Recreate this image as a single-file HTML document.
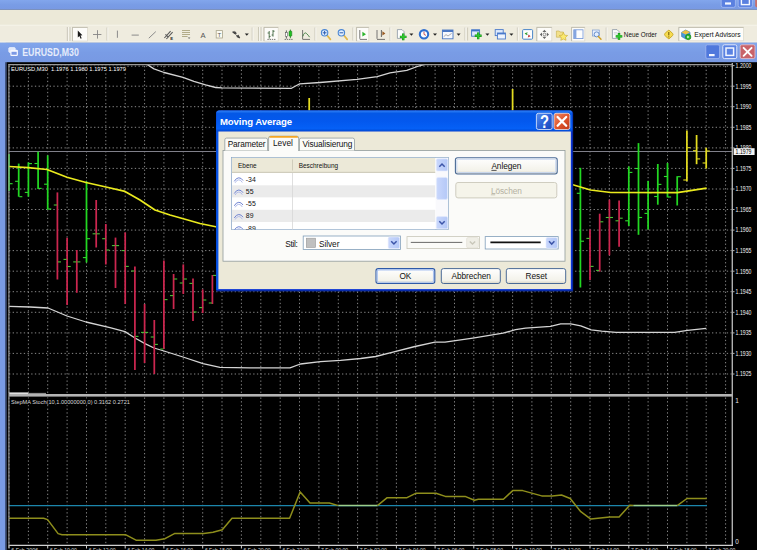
<!DOCTYPE html>
<html lang="de"><head><meta charset="utf-8"><title>EURUSD,M30 - Moving Average</title>
<style>html,body{margin:0;padding:0;background:#000;overflow:hidden}body{width:757px;height:550px;position:relative}svg{display:block;position:absolute;left:0;top:0}text{font-family:"Liberation Sans", sans-serif;white-space:pre}</style>
</head><body>
<svg width="757" height="550" viewBox="0 0 757 550">
<defs>
<linearGradient id="gTitle" x1="0" y1="0" x2="0" y2="1"><stop offset="0" stop-color="#2f80f6"/><stop offset="0.14" stop-color="#0458e6"/><stop offset="0.5" stop-color="#0358ee"/><stop offset="0.86" stop-color="#0560f6"/><stop offset="1" stop-color="#0046d0"/></linearGradient>
<linearGradient id="gInact" x1="0" y1="0" x2="0" y2="1"><stop offset="0" stop-color="#82a6ec"/><stop offset="0.5" stop-color="#799ce5"/><stop offset="1" stop-color="#7899e3"/></linearGradient>
<linearGradient id="gBtn" x1="0" y1="0" x2="0" y2="1"><stop offset="0" stop-color="#ffffff"/><stop offset="0.8" stop-color="#f3f2ea"/><stop offset="1" stop-color="#d9d5c6"/></linearGradient>
<linearGradient id="gClose" x1="0" y1="0" x2="1" y2="1"><stop offset="0" stop-color="#ee8c6a"/><stop offset="0.5" stop-color="#e0552c"/><stop offset="1" stop-color="#bf3a1a"/></linearGradient>
<linearGradient id="gHelp" x1="0" y1="0" x2="1" y2="1"><stop offset="0" stop-color="#5a90ee"/><stop offset="0.5" stop-color="#2b62d8"/><stop offset="1" stop-color="#1c47b8"/></linearGradient>
<linearGradient id="gSb" x1="0" y1="0" x2="1" y2="0"><stop offset="0" stop-color="#c9d7fc"/><stop offset="1" stop-color="#b4c8f7"/></linearGradient>
</defs>
<rect x="0" y="0" width="757" height="550" fill="#000"/>
<g stroke="#888888" stroke-width="1" stroke-dasharray="1.3 2.4" fill="none" shape-rendering="auto">
<path d="M9.0 66V393M9.0 397.5V545"/>
<path d="M28.4 66V393M28.4 397.5V545"/>
<path d="M47.7 66V393M47.7 397.5V545"/>
<path d="M67.1 66V393M67.1 397.5V545"/>
<path d="M86.5 66V393M86.5 397.5V545"/>
<path d="M105.8 66V393M105.8 397.5V545"/>
<path d="M125.2 66V393M125.2 397.5V545"/>
<path d="M144.6 66V393M144.6 397.5V545"/>
<path d="M163.9 66V393M163.9 397.5V545"/>
<path d="M183.3 66V393M183.3 397.5V545"/>
<path d="M202.7 66V393M202.7 397.5V545"/>
<path d="M222.0 66V393M222.0 397.5V545"/>
<path d="M241.4 66V393M241.4 397.5V545"/>
<path d="M260.8 66V393M260.8 397.5V545"/>
<path d="M280.2 66V393M280.2 397.5V545"/>
<path d="M299.5 66V393M299.5 397.5V545"/>
<path d="M318.9 66V393M318.9 397.5V545"/>
<path d="M338.3 66V393M338.3 397.5V545"/>
<path d="M357.6 66V393M357.6 397.5V545"/>
<path d="M377.0 66V393M377.0 397.5V545"/>
<path d="M396.4 66V393M396.4 397.5V545"/>
<path d="M415.7 66V393M415.7 397.5V545"/>
<path d="M435.1 66V393M435.1 397.5V545"/>
<path d="M454.5 66V393M454.5 397.5V545"/>
<path d="M473.8 66V393M473.8 397.5V545"/>
<path d="M493.2 66V393M493.2 397.5V545"/>
<path d="M512.6 66V393M512.6 397.5V545"/>
<path d="M531.9 66V393M531.9 397.5V545"/>
<path d="M551.3 66V393M551.3 397.5V545"/>
<path d="M570.7 66V393M570.7 397.5V545"/>
<path d="M590.0 66V393M590.0 397.5V545"/>
<path d="M609.4 66V393M609.4 397.5V545"/>
<path d="M628.8 66V393M628.8 397.5V545"/>
<path d="M648.1 66V393M648.1 397.5V545"/>
<path d="M667.5 66V393M667.5 397.5V545"/>
<path d="M686.9 66V393M686.9 397.5V545"/>
<path d="M706.2 66V393M706.2 397.5V545"/>
<path d="M725.6 66V393M725.6 397.5V545"/>
<path d="M9 66.2H732"/>
<path d="M9 86.2H732"/>
<path d="M9 106.7H732"/>
<path d="M9 127.3H732"/>
<path d="M9 147.9H732"/>
<path d="M9 168.4H732"/>
<path d="M9 189.0H732"/>
<path d="M9 209.5H732"/>
<path d="M9 230.1H732"/>
<path d="M9 250.6H732"/>
<path d="M9 271.2H732"/>
<path d="M9 291.7H732"/>
<path d="M9 312.3H732"/>
<path d="M9 332.9H732"/>
<path d="M9 353.4H732"/>
<path d="M9 374.0H732"/>
</g>
<path d="M9 151.5H732" stroke="#80808a" stroke-width="1.1" fill="none"/>
<clipPath id="cc"><rect x="9" y="65" width="723" height="329"/></clipPath><g clip-path="url(#cc)">
<path d="M144.8 63.0 L154.0 68.9 L164.1 72.5 L183.0 77.3 L193.9 81.3 L205.6 84.9 L215.7 87.5 L222.0 87.9 L291.5 88.3 L299.7 83.8 L320.0 82.5 L357.0 79.3 L377.2 76.6 L390.0 72.8 L406.8 70.3 L417.4 66.5 L427.5 63.6" stroke="#d4d4d4" stroke-width="1.3" fill="none" stroke-linejoin="round"/>
</g>
<path d="M9.0 306.4 L30.0 307.0 L48.0 308.0 L67.0 316.0 L86.0 322.0 L110.0 327.6 L125.0 331.6 L135.0 338.0 L145.0 343.6 L154.0 348.0 L164.0 351.0 L183.0 357.0 L203.0 363.6 L220.0 367.3 L250.0 367.8 L290.0 367.8 L300.4 364.0 L320.4 361.6 L340.5 360.3 L360.6 358.5 L375.7 356.5 L390.0 352.8 L415.0 346.5 L435.0 342.2 L445.0 342.2 L472.8 338.2 L503.0 333.2 L515.5 329.7 L525.5 328.2 L550.6 326.4 L560.7 323.9 L570.7 323.9 L580.8 325.9 L591.2 329.8 L601.6 331.1 L616.0 332.4 L674.5 332.4 L687.5 330.3 L706.2 328.3" stroke="#d4d4d4" stroke-width="1.3" fill="none" stroke-linejoin="round"/>
<path d="M9.0 154.0V191.0" stroke="#22d822" stroke-width="1.75" fill="none"/>
<path d="M9.5 183.7H12.6" stroke="#30e030" stroke-width="1.1" fill="none"/>
<path d="M18.7 163.6V196.7" stroke="#22d822" stroke-width="1.75" fill="none"/>
<path d="M15.1 181.3H18.2" stroke="#30e030" stroke-width="1.1" fill="none"/>
<path d="M19.2 196.7H22.3" stroke="#30e030" stroke-width="1.1" fill="none"/>
<path d="M28.4 162.4V196.7" stroke="#22d822" stroke-width="1.75" fill="none"/>
<path d="M24.8 192.4H27.9" stroke="#30e030" stroke-width="1.1" fill="none"/>
<path d="M28.9 163.6H32.0" stroke="#30e030" stroke-width="1.1" fill="none"/>
<path d="M38.1 151.8V188.9" stroke="#22d822" stroke-width="1.75" fill="none"/>
<path d="M34.5 163.5H37.6" stroke="#30e030" stroke-width="1.1" fill="none"/>
<path d="M38.6 188.4H41.7" stroke="#30e030" stroke-width="1.1" fill="none"/>
<path d="M47.7 155.4V209.7" stroke="#22d822" stroke-width="1.75" fill="none"/>
<path d="M44.1 184.2H47.2" stroke="#30e030" stroke-width="1.1" fill="none"/>
<path d="M48.2 209.0H51.3" stroke="#30e030" stroke-width="1.1" fill="none"/>
<path d="M57.4 192.4V279.5" stroke="#cc264f" stroke-width="1.75" fill="none"/>
<path d="M53.8 205.0H56.9" stroke="#4cc038" stroke-width="1.1" fill="none"/>
<path d="M57.9 261.9H61.0" stroke="#4cc038" stroke-width="1.1" fill="none"/>
<path d="M67.1 237.7V305.0" stroke="#cc264f" stroke-width="1.75" fill="none"/>
<path d="M63.5 259.4H66.6" stroke="#4cc038" stroke-width="1.1" fill="none"/>
<path d="M67.6 266.5H70.7" stroke="#4cc038" stroke-width="1.1" fill="none"/>
<path d="M76.8 250.0V292.8" stroke="#cc264f" stroke-width="1.75" fill="none"/>
<path d="M73.2 261.9H76.3" stroke="#4cc038" stroke-width="1.1" fill="none"/>
<path d="M77.3 261.9H80.4" stroke="#4cc038" stroke-width="1.1" fill="none"/>
<path d="M86.5 181.3V262.5" stroke="#22d822" stroke-width="1.75" fill="none"/>
<path d="M82.9 257.6H86.0" stroke="#30e030" stroke-width="1.1" fill="none"/>
<path d="M87.0 238.7H90.1" stroke="#30e030" stroke-width="1.1" fill="none"/>
<path d="M96.2 200.0V247.5" stroke="#cc264f" stroke-width="1.75" fill="none"/>
<path d="M92.6 233.8H95.7" stroke="#4cc038" stroke-width="1.1" fill="none"/>
<path d="M96.7 233.8H99.8" stroke="#4cc038" stroke-width="1.1" fill="none"/>
<path d="M105.8 224.0V264.5" stroke="#cc264f" stroke-width="1.75" fill="none"/>
<path d="M102.2 238.7H105.3" stroke="#4cc038" stroke-width="1.1" fill="none"/>
<path d="M106.3 250.0H109.4" stroke="#4cc038" stroke-width="1.1" fill="none"/>
<path d="M115.5 237.6V288.0" stroke="#cc264f" stroke-width="1.75" fill="none"/>
<path d="M111.9 245.6H115.0" stroke="#4cc038" stroke-width="1.1" fill="none"/>
<path d="M116.0 245.6H119.1" stroke="#4cc038" stroke-width="1.1" fill="none"/>
<path d="M125.2 232.4V304.0" stroke="#cc264f" stroke-width="1.75" fill="none"/>
<path d="M121.6 250.6H124.7" stroke="#4cc038" stroke-width="1.1" fill="none"/>
<path d="M125.7 266.4H128.8" stroke="#4cc038" stroke-width="1.1" fill="none"/>
<path d="M134.9 266.4V370.0" stroke="#cc264f" stroke-width="1.75" fill="none"/>
<path d="M131.3 271.0H134.4" stroke="#4cc038" stroke-width="1.1" fill="none"/>
<path d="M135.4 336.4H138.5" stroke="#4cc038" stroke-width="1.1" fill="none"/>
<path d="M144.6 304.0V363.0" stroke="#cc264f" stroke-width="1.75" fill="none"/>
<path d="M141.0 332.4H144.1" stroke="#4cc038" stroke-width="1.1" fill="none"/>
<path d="M145.1 332.4H148.2" stroke="#4cc038" stroke-width="1.1" fill="none"/>
<path d="M154.3 320.0V374.0" stroke="#cc264f" stroke-width="1.75" fill="none"/>
<path d="M150.7 337.0H153.8" stroke="#4cc038" stroke-width="1.1" fill="none"/>
<path d="M154.8 344.4H157.9" stroke="#4cc038" stroke-width="1.1" fill="none"/>
<path d="M163.9 260.6V349.0" stroke="#cc264f" stroke-width="1.75" fill="none"/>
<path d="M160.3 349.0H163.4" stroke="#4cc038" stroke-width="1.1" fill="none"/>
<path d="M164.4 299.6H167.5" stroke="#4cc038" stroke-width="1.1" fill="none"/>
<path d="M173.6 274.0V309.0" stroke="#cc264f" stroke-width="1.75" fill="none"/>
<path d="M170.0 295.6H173.1" stroke="#4cc038" stroke-width="1.1" fill="none"/>
<path d="M174.1 279.0H177.2" stroke="#4cc038" stroke-width="1.1" fill="none"/>
<path d="M183.3 264.4V294.0" stroke="#cc264f" stroke-width="1.75" fill="none"/>
<path d="M179.7 283.0H182.8" stroke="#4cc038" stroke-width="1.1" fill="none"/>
<path d="M183.8 279.0H186.9" stroke="#4cc038" stroke-width="1.1" fill="none"/>
<path d="M193.0 278.4V321.0" stroke="#cc264f" stroke-width="1.75" fill="none"/>
<path d="M189.4 283.4H192.5" stroke="#4cc038" stroke-width="1.1" fill="none"/>
<path d="M193.5 312.0H196.6" stroke="#4cc038" stroke-width="1.1" fill="none"/>
<path d="M202.7 289.4V313.0" stroke="#cc264f" stroke-width="1.75" fill="none"/>
<path d="M199.1 307.6H202.2" stroke="#4cc038" stroke-width="1.1" fill="none"/>
<path d="M203.2 300.0H206.3" stroke="#4cc038" stroke-width="1.1" fill="none"/>
<path d="M212.4 275.0V304.0" stroke="#cc264f" stroke-width="1.75" fill="none"/>
<path d="M208.8 303.0H211.9" stroke="#4cc038" stroke-width="1.1" fill="none"/>
<path d="M212.9 275.4H216.0" stroke="#4cc038" stroke-width="1.1" fill="none"/>
<path d="M309.2 98.0V120.0" stroke="#e4dc20" stroke-width="1.75" fill="none"/>
<path d="M512.6 89.0V120.0" stroke="#e4dc20" stroke-width="1.75" fill="none"/>
<path d="M580.4 167.8V287.5" stroke="#22d822" stroke-width="1.75" fill="none"/>
<path d="M576.8 193.3H579.9" stroke="#30e030" stroke-width="1.1" fill="none"/>
<path d="M580.9 241.2H584.0" stroke="#30e030" stroke-width="1.1" fill="none"/>
<path d="M590.0 229.5V279.9" stroke="#cc264f" stroke-width="1.75" fill="none"/>
<path d="M586.4 238.4H589.5" stroke="#4cc038" stroke-width="1.1" fill="none"/>
<path d="M590.5 266.4H593.6" stroke="#4cc038" stroke-width="1.1" fill="none"/>
<path d="M599.7 213.7V271.7" stroke="#cc264f" stroke-width="1.75" fill="none"/>
<path d="M596.1 270.4H599.2" stroke="#4cc038" stroke-width="1.1" fill="none"/>
<path d="M600.2 221.8H603.3" stroke="#4cc038" stroke-width="1.1" fill="none"/>
<path d="M609.4 199.7V255.2" stroke="#cc264f" stroke-width="1.75" fill="none"/>
<path d="M605.8 217.5H608.9" stroke="#4cc038" stroke-width="1.1" fill="none"/>
<path d="M609.9 217.5H613.0" stroke="#4cc038" stroke-width="1.1" fill="none"/>
<path d="M619.1 200.4V246.8" stroke="#cc264f" stroke-width="1.75" fill="none"/>
<path d="M615.5 220.8H618.6" stroke="#4cc038" stroke-width="1.1" fill="none"/>
<path d="M619.6 218.2H622.7" stroke="#4cc038" stroke-width="1.1" fill="none"/>
<path d="M628.8 166.5V225.9" stroke="#22d822" stroke-width="1.75" fill="none"/>
<path d="M625.2 220.8H628.3" stroke="#30e030" stroke-width="1.1" fill="none"/>
<path d="M629.3 172.4H632.4" stroke="#30e030" stroke-width="1.1" fill="none"/>
<path d="M638.5 143.1V234.8" stroke="#22d822" stroke-width="1.75" fill="none"/>
<path d="M634.9 168.5H638.0" stroke="#30e030" stroke-width="1.1" fill="none"/>
<path d="M639.0 217.5H642.1" stroke="#30e030" stroke-width="1.1" fill="none"/>
<path d="M648.1 181.0V229.6" stroke="#22d822" stroke-width="1.75" fill="none"/>
<path d="M644.5 213.4H647.6" stroke="#30e030" stroke-width="1.1" fill="none"/>
<path d="M648.6 192.7H651.7" stroke="#30e030" stroke-width="1.1" fill="none"/>
<path d="M657.8 164.0V204.7" stroke="#22d822" stroke-width="1.75" fill="none"/>
<path d="M654.2 196.5H657.3" stroke="#30e030" stroke-width="1.1" fill="none"/>
<path d="M658.3 184.4H661.4" stroke="#30e030" stroke-width="1.1" fill="none"/>
<path d="M667.5 163.0V197.5" stroke="#22d822" stroke-width="1.75" fill="none"/>
<path d="M663.9 176.5H667.0" stroke="#30e030" stroke-width="1.1" fill="none"/>
<path d="M668.0 197.0H671.1" stroke="#30e030" stroke-width="1.1" fill="none"/>
<path d="M677.2 176.2V205.5" stroke="#22d822" stroke-width="1.75" fill="none"/>
<path d="M677.7 176.7H680.8" stroke="#30e030" stroke-width="1.1" fill="none"/>
<path d="M686.9 130.4V181.3" stroke="#e4dc20" stroke-width="1.75" fill="none"/>
<path d="M683.3 180.0H686.4" stroke="#e4dc20" stroke-width="1.1" fill="none"/>
<path d="M687.4 147.7H690.5" stroke="#e4dc20" stroke-width="1.1" fill="none"/>
<path d="M696.6 135.0V164.2" stroke="#e4dc20" stroke-width="1.75" fill="none"/>
<path d="M693.0 150.7H696.1" stroke="#e4dc20" stroke-width="1.1" fill="none"/>
<path d="M697.1 158.9H700.2" stroke="#e4dc20" stroke-width="1.1" fill="none"/>
<path d="M706.2 147.7V168.6" stroke="#e4dc20" stroke-width="1.75" fill="none"/>
<path d="M702.6 163.0H705.7" stroke="#e4dc20" stroke-width="1.1" fill="none"/>
<path d="M706.7 151.0H709.8" stroke="#e4dc20" stroke-width="1.1" fill="none"/>
<path d="M9.0 166.5 L28.0 167.6 L47.0 169.5 L67.0 177.3 L86.0 182.5 L106.0 187.0 L125.0 191.4 L140.0 200.0 L155.0 210.0 L170.0 215.0 L186.0 219.5 L200.0 223.5 L217.0 227.0 L240.0 232.0" stroke="#eaea1e" stroke-width="1.7" fill="none" stroke-linejoin="round"/>
<path d="M560.0 181.0 L572.0 184.5 L590.5 190.0 L610.8 192.5 L677.3 192.7 L706.6 188.2" stroke="#eaea1e" stroke-width="1.7" fill="none" stroke-linejoin="round"/>
<rect x="9" y="394" width="724" height="2.6" fill="#b4b4b4"/>
<path d="M9 393.2H28" stroke="#e0e0e0" stroke-width="1.6"/><path d="M28 393.4H46" stroke="#c8c8c8" stroke-width="0.8"/>
<path d="M732.3 63V545" stroke="#b0b0b0" stroke-width="1.4" fill="none"/>
<path d="M9 545.4H733" stroke="#d0d0d0" stroke-width="1.2" fill="none"/>
<path d="M9.0 545V548.5" stroke="#d0d0d0" stroke-width="1"/>
<text x="11.2" y="552.3" font-size="5.6" fill="#d8d8d8" textLength="27" lengthAdjust="spacingAndGlyphs">6 Feb 2006</text>
<path d="M47.7 545V548.5" stroke="#d0d0d0" stroke-width="1"/>
<text x="49.9" y="552.3" font-size="5.6" fill="#d8d8d8" textLength="27" lengthAdjust="spacingAndGlyphs">6 Feb 10:00</text>
<path d="M86.5 545V548.5" stroke="#d0d0d0" stroke-width="1"/>
<text x="88.7" y="552.3" font-size="5.6" fill="#d8d8d8" textLength="27" lengthAdjust="spacingAndGlyphs">6 Feb 12:00</text>
<path d="M125.2 545V548.5" stroke="#d0d0d0" stroke-width="1"/>
<text x="127.4" y="552.3" font-size="5.6" fill="#d8d8d8" textLength="27" lengthAdjust="spacingAndGlyphs">6 Feb 14:00</text>
<path d="M163.9 545V548.5" stroke="#d0d0d0" stroke-width="1"/>
<text x="166.1" y="552.3" font-size="5.6" fill="#d8d8d8" textLength="27" lengthAdjust="spacingAndGlyphs">6 Feb 16:00</text>
<path d="M202.7 545V548.5" stroke="#d0d0d0" stroke-width="1"/>
<text x="204.9" y="552.3" font-size="5.6" fill="#d8d8d8" textLength="27" lengthAdjust="spacingAndGlyphs">6 Feb 18:00</text>
<path d="M241.4 545V548.5" stroke="#d0d0d0" stroke-width="1"/>
<text x="243.6" y="552.3" font-size="5.6" fill="#d8d8d8" textLength="27" lengthAdjust="spacingAndGlyphs">6 Feb 20:00</text>
<path d="M280.2 545V548.5" stroke="#d0d0d0" stroke-width="1"/>
<text x="282.4" y="552.3" font-size="5.6" fill="#d8d8d8" textLength="27" lengthAdjust="spacingAndGlyphs">6 Feb 22:00</text>
<path d="M318.9 545V548.5" stroke="#d0d0d0" stroke-width="1"/>
<text x="321.1" y="552.3" font-size="5.6" fill="#d8d8d8" textLength="27" lengthAdjust="spacingAndGlyphs">7 Feb 00:00</text>
<path d="M357.6 545V548.5" stroke="#d0d0d0" stroke-width="1"/>
<text x="359.8" y="552.3" font-size="5.6" fill="#d8d8d8" textLength="27" lengthAdjust="spacingAndGlyphs">7 Feb 02:00</text>
<path d="M396.4 545V548.5" stroke="#d0d0d0" stroke-width="1"/>
<text x="398.6" y="552.3" font-size="5.6" fill="#d8d8d8" textLength="27" lengthAdjust="spacingAndGlyphs">7 Feb 04:00</text>
<path d="M435.1 545V548.5" stroke="#d0d0d0" stroke-width="1"/>
<text x="437.3" y="552.3" font-size="5.6" fill="#d8d8d8" textLength="27" lengthAdjust="spacingAndGlyphs">7 Feb 06:00</text>
<path d="M473.8 545V548.5" stroke="#d0d0d0" stroke-width="1"/>
<text x="476.0" y="552.3" font-size="5.6" fill="#d8d8d8" textLength="27" lengthAdjust="spacingAndGlyphs">7 Feb 08:00</text>
<path d="M512.6 545V548.5" stroke="#d0d0d0" stroke-width="1"/>
<text x="514.8" y="552.3" font-size="5.6" fill="#d8d8d8" textLength="27" lengthAdjust="spacingAndGlyphs">7 Feb 10:00</text>
<path d="M551.3 545V548.5" stroke="#d0d0d0" stroke-width="1"/>
<text x="553.5" y="552.3" font-size="5.6" fill="#d8d8d8" textLength="27" lengthAdjust="spacingAndGlyphs">7 Feb 12:00</text>
<path d="M590.0 545V548.5" stroke="#d0d0d0" stroke-width="1"/>
<text x="592.2" y="552.3" font-size="5.6" fill="#d8d8d8" textLength="27" lengthAdjust="spacingAndGlyphs">7 Feb 14:00</text>
<path d="M628.8 545V548.5" stroke="#d0d0d0" stroke-width="1"/>
<text x="631.0" y="552.3" font-size="5.6" fill="#d8d8d8" textLength="27" lengthAdjust="spacingAndGlyphs">7 Feb 16:00</text>
<path d="M667.5 545V548.5" stroke="#d0d0d0" stroke-width="1"/>
<text x="669.7" y="552.3" font-size="5.6" fill="#d8d8d8" textLength="27" lengthAdjust="spacingAndGlyphs">7 Feb 18:00</text>
<path d="M706.2 545V548.5" stroke="#d0d0d0" stroke-width="1"/>
<text x="708.4" y="552.3" font-size="5.6" fill="#d8d8d8" textLength="27" lengthAdjust="spacingAndGlyphs">7 Feb 20:00</text>
<path d="M9 505.6H707" stroke="#1c86ac" stroke-width="1.3" fill="none"/>
<path d="M9.0 518.3 L43.6 518.3 L47.6 519.6 L58.1 533.6 L62.0 534.7 L125.5 534.7 L136.0 540.2 L155.9 540.2 L165.0 538.7 L174.4 533.6 L203.8 533.6 L213.0 532.3 L222.3 529.7 L232.0 518.3 L289.6 518.3 L300.2 491.9 L310.0 503.0 L329.3 503.0 L338.5 505.6" stroke="#8e8e1c" stroke-width="1.5" fill="none" stroke-linejoin="round"/>
<path d="M338.5 505.6 L377.4 505.6" stroke="#9ccf8c" stroke-width="1.5" fill="none" stroke-linejoin="round"/>
<path d="M377.4 505.6 L387.2 497.7 L407.0 497.7 L416.2 493.2 L436.0 493.2 L445.3 496.4 L465.1 496.4 L474.4 500.3 L478.3 499.3 L503.4 499.3 L512.7 490.6 L522.7 490.6 L541.7 495.9 L552.3 495.9 L561.5 495.0 L570.2 498.5 L580.8 511.7 L590.8 519.1 L609.8 517.0 L619.1 517.0 L629.7 505.3 L633.6 505.6" stroke="#8e8e1c" stroke-width="1.5" fill="none" stroke-linejoin="round"/>
<path d="M633.6 505.6 L677.2 505.6" stroke="#9ccf8c" stroke-width="1.5" fill="none" stroke-linejoin="round"/>
<path d="M677.2 505.6 L687.0 498.5 L706.8 498.5" stroke="#8e8e1c" stroke-width="1.5" fill="none" stroke-linejoin="round"/>
<rect x="10.5" y="66.2" width="116.5" height="6.6" fill="#000"/>
<rect x="10.5" y="398.4" width="120.5" height="6.8" fill="#000"/>
<text x="11" y="71.4" font-size="5.9" fill="#ffffff" textLength="115" lengthAdjust="spacingAndGlyphs">EURUSD,M30  1.1976 1.1980 1.1975 1.1979</text>
<text x="11" y="403.8" font-size="5.9" fill="#d8d8d8" textLength="119" lengthAdjust="spacingAndGlyphs">StepMA Stoch(10,1.00000000,0) 0.3162 0.2721</text>
<path d="M732 65.6H734.5" stroke="#b0b0b0" stroke-width="1"/>
<text x="735.6" y="67.9" font-size="6.4" fill="#f4f4f4" textLength="15.8" lengthAdjust="spacingAndGlyphs">1.2000</text>
<path d="M732 86.2H734.5" stroke="#b0b0b0" stroke-width="1"/>
<text x="735.6" y="88.5" font-size="6.4" fill="#f4f4f4" textLength="15.8" lengthAdjust="spacingAndGlyphs">1.1995</text>
<path d="M732 106.7H734.5" stroke="#b0b0b0" stroke-width="1"/>
<text x="735.6" y="109.0" font-size="6.4" fill="#f4f4f4" textLength="15.8" lengthAdjust="spacingAndGlyphs">1.1990</text>
<path d="M732 127.3H734.5" stroke="#b0b0b0" stroke-width="1"/>
<text x="735.6" y="129.6" font-size="6.4" fill="#f4f4f4" textLength="15.8" lengthAdjust="spacingAndGlyphs">1.1985</text>
<path d="M732 147.9H734.5" stroke="#b0b0b0" stroke-width="1"/>
<text x="735.6" y="150.2" font-size="6.4" fill="#f4f4f4" textLength="15.8" lengthAdjust="spacingAndGlyphs">1.1980</text>
<path d="M732 168.4H734.5" stroke="#b0b0b0" stroke-width="1"/>
<text x="735.6" y="170.7" font-size="6.4" fill="#f4f4f4" textLength="15.8" lengthAdjust="spacingAndGlyphs">1.1975</text>
<path d="M732 189.0H734.5" stroke="#b0b0b0" stroke-width="1"/>
<text x="735.6" y="191.3" font-size="6.4" fill="#f4f4f4" textLength="15.8" lengthAdjust="spacingAndGlyphs">1.1970</text>
<path d="M732 209.5H734.5" stroke="#b0b0b0" stroke-width="1"/>
<text x="735.6" y="211.8" font-size="6.4" fill="#f4f4f4" textLength="15.8" lengthAdjust="spacingAndGlyphs">1.1965</text>
<path d="M732 230.1H734.5" stroke="#b0b0b0" stroke-width="1"/>
<text x="735.6" y="232.4" font-size="6.4" fill="#f4f4f4" textLength="15.8" lengthAdjust="spacingAndGlyphs">1.1960</text>
<path d="M732 250.6H734.5" stroke="#b0b0b0" stroke-width="1"/>
<text x="735.6" y="252.9" font-size="6.4" fill="#f4f4f4" textLength="15.8" lengthAdjust="spacingAndGlyphs">1.1955</text>
<path d="M732 271.2H734.5" stroke="#b0b0b0" stroke-width="1"/>
<text x="735.6" y="273.5" font-size="6.4" fill="#f4f4f4" textLength="15.8" lengthAdjust="spacingAndGlyphs">1.1950</text>
<path d="M732 291.7H734.5" stroke="#b0b0b0" stroke-width="1"/>
<text x="735.6" y="294.0" font-size="6.4" fill="#f4f4f4" textLength="15.8" lengthAdjust="spacingAndGlyphs">1.1945</text>
<path d="M732 312.3H734.5" stroke="#b0b0b0" stroke-width="1"/>
<text x="735.6" y="314.6" font-size="6.4" fill="#f4f4f4" textLength="15.8" lengthAdjust="spacingAndGlyphs">1.1940</text>
<path d="M732 332.9H734.5" stroke="#b0b0b0" stroke-width="1"/>
<text x="735.6" y="335.2" font-size="6.4" fill="#f4f4f4" textLength="15.8" lengthAdjust="spacingAndGlyphs">1.1935</text>
<path d="M732 353.4H734.5" stroke="#b0b0b0" stroke-width="1"/>
<text x="735.6" y="355.7" font-size="6.4" fill="#f4f4f4" textLength="15.8" lengthAdjust="spacingAndGlyphs">1.1930</text>
<path d="M732 374.0H734.5" stroke="#b0b0b0" stroke-width="1"/>
<text x="735.6" y="376.3" font-size="6.4" fill="#f4f4f4" textLength="15.8" lengthAdjust="spacingAndGlyphs">1.1925</text>
<rect x="733.6" y="148.2" width="21" height="6.8" fill="#f4f4f4"/>
<text x="735.6" y="153.9" font-size="6.4" fill="#000" textLength="15.8" lengthAdjust="spacingAndGlyphs">1.1979</text>
<text x="735.2" y="402.8" font-size="6.4" fill="#e8e8e8">1</text>
<text x="735.2" y="543.9" font-size="6.4" fill="#e8e8e8">0</text>
<rect x="0" y="42" width="5.6" height="508" fill="#7a9be4"/>
<rect x="5.6" y="62" width="1.2" height="488" fill="#3d4c70"/>
<path d="M8.9 64.1V548" stroke="#9a9a9a" stroke-width="1.1" fill="none"/>
<path d="M8.4 64.6H732.5" stroke="#9a9a9a" stroke-width="1.1" fill="none"/>
<rect x="0" y="0" width="757" height="9.8" fill="url(#gInact)"/>
<rect x="0" y="9.8" width="757" height="33" fill="#ece9d8"/>
<rect x="0" y="24.8" width="757" height="0.9" fill="#fbfaf4"/>
<rect x="0" y="25.7" width="757" height="16.3" fill="#efecdf"/>
<rect x="0" y="41.6" width="757" height="1" fill="#f8f7f0"/>
<rect x="0" y="42.6" width="757" height="19.6" fill="url(#gInact)"/>
<text x="22.2" y="55.8" font-size="10.6" font-weight="bold" fill="#e6ecfb" textLength="56.6" lengthAdjust="spacingAndGlyphs">EURUSD,M30</text>
<g id="tb">
<path d="M67.4 27V41" stroke="#b8b5a4" stroke-width="0.9"/><path d="M68.2 27V41" stroke="#fff" stroke-width="0.7"/>
<path d="M70.2 27V41" stroke="#b8b5a4" stroke-width="0.9"/><path d="M71.0 27V41" stroke="#fff" stroke-width="0.7"/>
<rect x="72.4" y="27.4" width="15.2" height="13.6" fill="#fdfcf9" stroke="#dad7ca" stroke-width="0.7"/><path d="M72.4 41V27.4H87.6" stroke="#b4b2a4" stroke-width="0.7" fill="none"/>
<path d="M77.8 30.6V37.4L79.4 36L80.6 38.8L81.7 38.3L80.5 35.6L82.4 35.3Z" fill="#1a1a1a"/>
<path d="M93 34.5H101.4M97.5 30.2V38.6" stroke="#858585" stroke-width="0.9"/>
<path d="M107.0 27.5V40.5" stroke="#c5c2b2" stroke-width="0.9"/><path d="M107.8 27.5V40.5" stroke="#fff" stroke-width="0.7"/>
<path d="M117.4 30.6V37.8" stroke="#8a8a8a" stroke-width="1"/>
<path d="M131.6 35.1H138.8" stroke="#8a8a8a" stroke-width="1"/>
<path d="M148.8 38.2L155.8 31.6" stroke="#8a8a8a" stroke-width="1"/>
<path d="M164.4 38L170.6 31.2M166.4 39L172.6 32.2M165.4 34.4L168.6 37.4" stroke="#5a5a5a" stroke-width="1.1" fill="none"/><text x="170.2" y="39.8" font-size="4.2" fill="#222" font-weight="bold">E</text>
<path d="M182 30.5H190M182 32.5H190M182 34.5H190M182 36.5H187.6" stroke="#a29c74" stroke-width="0.8"/><path d="M187.8 37.4H190.4L189.1 39Z" fill="#666"/>
<text x="203" y="37.6" font-size="7.6" fill="#555" text-anchor="middle">A</text>
<rect x="216.2" y="30.6" width="6.2" height="7.4" fill="#fbfaf2" stroke="#a9a48a" stroke-width="0.8"/><text x="219.3" y="37" font-size="6" fill="#555" text-anchor="middle">T</text>
<path d="M232.6 31.6L236 34.2M236.4 35.4L239.8 38" stroke="#444" stroke-width="1.4"/><path d="M234.6 30.8L237 33.4L233.8 33.8Z" fill="#444"/><path d="M238.4 34.6L240 37.8L236.8 37.2Z" fill="#444"/>
<path d="M244.8 33.6H248.8L246.8 35.8Z" fill="#222"/>
<path d="M252.2 27.5V40.5" stroke="#c5c2b2" stroke-width="0.9"/><path d="M253.0 27.5V40.5" stroke="#fff" stroke-width="0.7"/>
<path d="M258.8 27V41" stroke="#b8b5a4" stroke-width="0.9"/><path d="M259.6 27V41" stroke="#fff" stroke-width="0.7"/>
<path d="M261.2 27V41" stroke="#b8b5a4" stroke-width="0.9"/><path d="M262.0 27V41" stroke="#fff" stroke-width="0.7"/>
<rect x="264.0" y="27.4" width="14.2" height="13.6" fill="#fdfcf9" stroke="#dad7ca" stroke-width="0.7"/><path d="M264.0 41V27.4H278.2" stroke="#b4b2a4" stroke-width="0.7" fill="none"/>
<path d="M269.2 31V38.6M267.6 33H269.2M269.2 36.4H270.6M273 30V36.6M273 31.2H274.6M271.6 35H273" stroke="#2c562c" stroke-width="0.8" fill="none"/><path d="M267.4 39.4H276" stroke="#555" stroke-width="0.8" stroke-dasharray="1.4 0.8"/>
<path d="M286.4 30.4V38.6" stroke="#444" stroke-width="0.8"/><rect x="285.4" y="32.4" width="2" height="4" fill="#fff" stroke="#444" stroke-width="0.5"/><path d="M290.4 29.6V38.2" stroke="#1a7a1a" stroke-width="0.8"/><rect x="289" y="31" width="2.8" height="5.2" rx="0.8" fill="#22c022" stroke="#157015" stroke-width="0.5"/><path d="M284.6 39.4H293.2" stroke="#555" stroke-width="0.8" stroke-dasharray="1.4 0.8"/>
<path d="M302.6 30V39.2M302.6 39.4H310" stroke="#555" stroke-width="0.8"/><path d="M302.8 36.4Q304.4 31.6 306.4 33.4T309.6 37.2" stroke="#3a7a3a" stroke-width="0.9" fill="none"/>
<path d="M315.0 27.5V40.5" stroke="#c5c2b2" stroke-width="0.9"/><path d="M315.8 27.5V40.5" stroke="#fff" stroke-width="0.7"/>
<path d="M326.8 35.0L330.4 39.4" stroke="#e2b94a" stroke-width="1.7" stroke-linecap="round"/>
<circle cx="324.6" cy="32.8" r="3.2" fill="#e4f0fe" stroke="#4a86d4" stroke-width="1.1"/>
<path d="M322.7 32.8H326.5" stroke="#2a5cb0" stroke-width="1"/>
<path d="M324.6 30.9V34.7" stroke="#2a5cb0" stroke-width="1"/>
<path d="M343.6 35.0L347.2 39.4" stroke="#e2b94a" stroke-width="1.7" stroke-linecap="round"/>
<circle cx="341.4" cy="32.8" r="3.2" fill="#e4f0fe" stroke="#4a86d4" stroke-width="1.1"/>
<path d="M339.5 32.8H343.3" stroke="#2a5cb0" stroke-width="1"/>
<path d="M353.0 27.5V40.5" stroke="#c5c2b2" stroke-width="0.9"/><path d="M353.8 27.5V40.5" stroke="#fff" stroke-width="0.7"/>
<rect x="356.6" y="27.4" width="12.2" height="13.6" fill="#fdfcf9" stroke="#dad7ca" stroke-width="0.7"/><path d="M356.6 41V27.4H368.8" stroke="#b4b2a4" stroke-width="0.7" fill="none"/>
<path d="M359.8 30V38.8M359.8 39.4H367" stroke="#555" stroke-width="0.8"/><path d="M362.4 31.8L366 34.2L362.4 36.6Z" fill="#2cb42c"/>
<path d="M377 30V38.8M377 39.4H385" stroke="#555" stroke-width="0.8"/><path d="M381.4 30V37" stroke="#444" stroke-width="0.8"/><path d="M382.4 31.2L385.4 33.4L382.4 35.6Z" fill="#9a5a20"/>
<path d="M390.0 27.5V40.5" stroke="#c5c2b2" stroke-width="0.9"/><path d="M390.8 27.5V40.5" stroke="#fff" stroke-width="0.7"/>
<path d="M397.4 29.6H402L404 31.6V38.4H397.4Z" fill="#fdfdfd" stroke="#7a8a9a" stroke-width="0.7"/>
<path d="M399.9 36.9H406.5M403.2 33.6V40.2" stroke="#118a11" stroke-width="2.4" fill="none"/>
<path d="M400.3 36.9H406.1M403.2 34.0V39.8" stroke="#2fc42f" stroke-width="1.6" fill="none"/>

<path d="M409.4 33.6H413.4L411.4 35.8Z" fill="#222"/>
<circle cx="424" cy="34.3" r="4.2" fill="#fbfdff" stroke="#2f6fd0" stroke-width="2.1"/><path d="M424 31.6V34.4L426 35.4" stroke="#c03030" stroke-width="0.8" fill="none"/>
<path d="M433.0 33.6H437.0L435.0 35.8Z" fill="#222"/>
<rect x="442.4" y="30" width="10.6" height="8.8" fill="#f6f9ff" stroke="#4a78c4" stroke-width="0.9"/><rect x="442.4" y="30" width="10.6" height="2" fill="#4a78c4"/><path d="M443.6 36.8L446 34.6L448 36L451.6 33.4" stroke="#888" stroke-width="0.7" fill="none"/>
<path d="M456.6 33.6H460.6L458.6 35.8Z" fill="#222"/>
<path d="M465.0 27.5V40.5" stroke="#c5c2b2" stroke-width="0.9"/><path d="M465.8 27.5V40.5" stroke="#fff" stroke-width="0.7"/>
<path d="M467.6 27.5V40.5" stroke="#c5c2b2" stroke-width="0.8"/>
<rect x="471.6" y="29.8" width="8" height="6.4" fill="#dfeafc" stroke="#3f74c8" stroke-width="0.9"/><rect x="471.6" y="29.8" width="8" height="1.6" fill="#3f74c8"/>
<path d="M474.8 35.8H481.6M478.2 32.4V39.2" stroke="#118a11" stroke-width="2.4" fill="none"/>
<path d="M475.2 35.8H481.2M478.2 32.8V38.8" stroke="#2fc42f" stroke-width="1.6" fill="none"/>

<path d="M485.4 33.6H489.4L487.4 35.8Z" fill="#222"/>
<rect x="495.2" y="29.6" width="8" height="6" fill="#dfeafc" stroke="#4a7acb" stroke-width="0.9"/><rect x="497.4" y="33" width="8" height="6" fill="#eef4fe" stroke="#4a7acb" stroke-width="0.9"/><rect x="497.4" y="33" width="8" height="1.4" fill="#4a7acb"/>
<path d="M509.4 33.6H513.4L511.4 35.8Z" fill="#222"/>
<path d="M517.4 27.5V40.5" stroke="#c5c2b2" stroke-width="0.9"/><path d="M518.2 27.5V40.5" stroke="#fff" stroke-width="0.7"/>
<rect x="522.6" y="29.6" width="10" height="9.6" rx="1" fill="#fdfdfd" stroke="#4a86c8" stroke-width="1"/><path d="M524.6 33.2L527.6 32.2L526.6 35.2Z" fill="#22a422"/><path d="M530.6 36.2L527.8 37.4L528.6 34.4Z" fill="#d03030"/><path d="M526.4 33.4L529 36" stroke="#888" stroke-width="0.6"/>
<rect x="536.8" y="27.4" width="15.0" height="13.6" fill="#fdfcf9" stroke="#dad7ca" stroke-width="0.7"/><path d="M536.8 41V27.4H551.8" stroke="#b4b2a4" stroke-width="0.7" fill="none"/>
<path d="M544.4 29.8L546.4 32H542.4ZM544.4 39L546.4 36.8H542.4ZM539.8 34.4L542 32.4V36.4ZM549 34.4L546.8 32.4V36.4Z" fill="#666"/><circle cx="544.4" cy="34.4" r="1.4" fill="none" stroke="#666" stroke-width="0.7"/>
<path d="M556.4 31H559.2L560 32H563.4V37.2H556.4Z" fill="#f3e08a" stroke="#c4ac4a" stroke-width="0.6"/><path d="M563.4 32.6L564.7 35.2L567.6 35.5L565.5 37.5L566 40.3L563.4 39L560.8 40.3L561.3 37.5L559.2 35.5L562.1 35.2Z" fill="#fbe96e" stroke="#c8aa30" stroke-width="0.6"/>
<rect x="571.6" y="27.4" width="13.2" height="13.6" fill="#fdfcf9" stroke="#dad7ca" stroke-width="0.7"/><path d="M571.6 41V27.4H584.8" stroke="#b4b2a4" stroke-width="0.7" fill="none"/>
<rect x="573.8" y="29.8" width="9.2" height="8.8" fill="#fdfdfd" stroke="#6f93d6" stroke-width="0.8"/><rect x="573.8" y="29.8" width="2.6" height="8.8" fill="#86a6e0"/>
<rect x="592.4" y="30" width="6.8" height="6" fill="#e8f0fc" stroke="#7a9ad0" stroke-width="0.7"/><circle cx="596.6" cy="34.4" r="2.5" fill="#e4effc" fill-opacity="0.8" stroke="#5a86c8" stroke-width="0.9"/><path d="M598.4 36.4L601 39.2" stroke="#d0a020" stroke-width="1.4" stroke-linecap="round"/>
<path d="M606.2 27.5V40.5" stroke="#c5c2b2" stroke-width="0.9"/><path d="M607.0 27.5V40.5" stroke="#fff" stroke-width="0.7"/>
<path d="M612.4 29.6H617L619 31.6V38.4H612.4Z" fill="#fdfdfd" stroke="#7a8a9a" stroke-width="0.7"/><path d="M613.8 32.4H617.4M613.8 34H617.4" stroke="#aab" stroke-width="0.5"/>
<path d="M615.7 36.4H622.3M619.0 33.1V39.7" stroke="#118a11" stroke-width="2.4" fill="none"/>
<path d="M616.1 36.4H621.9M619.0 33.5V39.3" stroke="#2fc42f" stroke-width="1.6" fill="none"/>

<text x="623.8" y="36.7" font-size="6.5" fill="#111" textLength="33.2" lengthAdjust="spacingAndGlyphs">Neue Order</text>
<rect x="665.4" y="31.1" width="6.8" height="6.8" rx="1.6" transform="rotate(45 668.8 34.5)" fill="#f7dc50" stroke="#c0a020" stroke-width="0.8"/><path d="M668.8 32V35.4M668.8 36.4V37.4" stroke="#6a5200" stroke-width="1"/>
<rect x="678.8" y="27.4" width="64.8" height="13.4" fill="#fdfcf9" stroke="#dad7ca" stroke-width="0.7"/><path d="M678.8 40.8V27.4H743.6" stroke="#b4b2a4" stroke-width="0.7" fill="none"/>
<path d="M681.6 32.4L685.6 30L690 32.2V36.6L685.8 39L681.6 36.6Z" fill="#4a9ad8" stroke="#2a6aa8" stroke-width="0.6"/><path d="M681.6 32.4L685.8 34.6L690 32.2L685.6 30Z" fill="#f0c040"/><circle cx="688.2" cy="37" r="2.7" fill="#2db82d" stroke="#0f7a0f" stroke-width="0.6"/><path d="M687.4 35.8V38.2L689.4 37Z" fill="#fff"/>
<text x="694.3" y="37.1" font-size="6.6" fill="#111" textLength="46.3" lengthAdjust="spacingAndGlyphs">Expert Advisors</text>
</g>
<g id="topbtns">
<rect x="721.2" y="-8" width="14.2" height="15.4" rx="1.8" fill="#5a80e0" stroke="#a8bdf2" stroke-width="0.8"/><rect x="725" y="2.4" width="6" height="2.2" fill="#f4f7ff"/>
<rect x="738.2" y="-8" width="14.2" height="15.4" rx="1.8" fill="#5a80e0" stroke="#a8bdf2" stroke-width="0.8"/><rect x="741.4" y="-4" width="8" height="8.6" fill="none" stroke="#f4f7ff" stroke-width="1.4"/>
<rect x="755.2" y="-8" width="14" height="15.4" rx="1.8" fill="#c8706a"/>
</g>
<g id="innerbtns">
<rect x="705.8" y="44.8" width="13.8" height="13.8" rx="1.6" fill="#4f78dc" stroke="#a3b9f0" stroke-width="0.8"/><rect x="709" y="54" width="5.6" height="2.2" fill="#f4f7ff"/>
<rect x="722.8" y="44.8" width="14" height="13.8" rx="1.6" fill="#5a82e2" stroke="#dfe7fb" stroke-width="1"/><rect x="726" y="48" width="7.6" height="7.4" fill="none" stroke="#f4f7ff" stroke-width="1.5"/>
<rect x="740.2" y="44.8" width="14.8" height="13.8" rx="1.6" fill="#c9646a" stroke="#e6c2cc" stroke-width="0.8"/><path d="M743.6 47.8L751.6 55.8M751.6 47.8L743.6 55.8" stroke="#fff" stroke-width="1.9" stroke-linecap="round"/>
<rect x="8.9" y="47.7" width="6.2" height="4.6" rx="0.6" fill="#dfe7fb" stroke="#f4f7ff" stroke-width="0.9"/><rect x="10.9" y="50.3" width="6.4" height="5" rx="0.6" fill="#7b99e4" stroke="#f6f8ff" stroke-width="1.2"/><rect x="10.9" y="50.1" width="6.4" height="1.7" fill="#f6f8ff"/>
</g>
<g id="dlg">
<path d="M216.2 291.6V113.6Q216.2 110.6 219.2 110.6H570.2Q573.2 110.6 573.2 113.6V291.6Z" fill="#07207c"/>
<path d="M216.2 290.6V113.6Q216.2 110.6 219.2 110.6H569.4Q572.4 110.6 572.4 113.6V290.6Z" fill="#0a34d4"/>
<rect x="216.2" y="125" width="2.4" height="165" fill="#0653e4"/>
<path d="M216.2 131.5V113.6Q216.2 110.6 219.2 110.6H569.4Q572.4 110.6 572.4 113.6V131.5Z" fill="url(#gTitle)"/>
<rect x="218.4" y="131.5" width="352.4" height="157.6" fill="#ece9d8"/>
<text x="219.9" y="125.4" font-size="9.6" font-weight="bold" fill="#fff" textLength="72.3" lengthAdjust="spacing">Moving Average</text>
<rect x="536.4" y="113.3" width="15.8" height="16.2" rx="2" fill="url(#gHelp)" stroke="#e8eefc" stroke-width="0.8"/>
<text x="0" y="0" transform="translate(544.4 127.8) scale(0.84 1)" font-size="17.6" font-weight="bold" fill="#fff" text-anchor="middle">?</text>
<rect x="554" y="113.3" width="15.8" height="16.2" rx="2" fill="url(#gClose)" stroke="#f3e3dc" stroke-width="0.8"/>
<path d="M557.6 117L566.2 125.8M566.2 117L557.6 125.8" stroke="#fff" stroke-width="2.3" stroke-linecap="round" fill="none"/>
<rect x="223" y="150.5" width="342" height="110.7" fill="#fbfbf9" stroke="#919b9c" stroke-width="0.8"/>
<path d="M224.8 150.5V139.9Q224.8 138.1 226.6 138.1H265.8Q267.6 138.1 267.6 139.9V150.5" fill="#fbfbf8" stroke="#919b9c" stroke-width="0.8"/>
<path d="M299.4 150.5V139.9Q299.4 138.1 301.2 138.1H352.7Q354.5 138.1 354.5 139.9V150.5" fill="#fbfbf8" stroke="#919b9c" stroke-width="0.8"/>
<path d="M268.6 151.2V138Q268.6 136.2 270.4 136.2H296.9Q298.7 136.2 298.7 138V151.2Z" fill="#fbfbf9"/>
<path d="M268.6 151V138Q268.6 136.2 270.4 136.2H296.9Q298.7 136.2 298.7 138V151" fill="none" stroke="#919b9c" stroke-width="0.8"/>
<path d="M269.4 136.9Q269.8 136 271 136H296.3Q297.5 136 297.9 136.9V137.8H269.4Z" fill="#f5a623"/>
<text x="227.7" y="146.8" font-size="8.3" fill="#111" textLength="37.7" lengthAdjust="spacing">Parameter</text>
<text x="272.9" y="146" font-size="8.3" fill="#111" textLength="20" lengthAdjust="spacing">Level</text>
<text x="302.6" y="146.8" font-size="8.3" fill="#111" textLength="49.8" lengthAdjust="spacing">Visualisierung</text>
<rect x="231.4" y="157.4" width="217.2" height="72.2" fill="#fff" stroke="#8faac8" stroke-width="0.8"/>
<rect x="231.9" y="157.9" width="203.4" height="15.2" fill="#ece9d8"/>
<rect x="231.9" y="171.8" width="203.4" height="1.3" fill="#d0cdbd"/>
<rect x="292" y="159.5" width="0.8" height="11" fill="#c8c5b4"/>
<text x="238" y="168.4" font-size="7.2" fill="#111" textLength="18.7" lengthAdjust="spacingAndGlyphs">Ebene</text>
<text x="298.7" y="168.4" font-size="7.2" fill="#111" textLength="39.4" lengthAdjust="spacingAndGlyphs">Beschreibung</text>
<clipPath id="cl"><rect x="231.9" y="173.1" width="203.6" height="56.6"/></clipPath>
<g clip-path="url(#cl)">
<rect x="231.9" y="173.1" width="203.5" height="12.2" fill="#fff"/>
<path d="M234.3 181.3Q236.2 177.8 238.8 177.8Q241.4 177.8 243 180.5" stroke="#6f83d2" stroke-width="1" fill="none"/>
<path d="M235.1 182.8Q236.6 179.8 238.8 179.8Q241 179.8 242.3 182.5" stroke="#aab6e8" stroke-width="0.9" fill="none"/>
<text x="245.8" y="181.7" font-size="6.9" fill="#111">-34</text>
<rect x="231.9" y="185.3" width="203.5" height="12.3" fill="#ebebeb"/>
<path d="M234.3 193.5Q236.2 190.0 238.8 190.0Q241.4 190.0 243 192.7" stroke="#6f83d2" stroke-width="1" fill="none"/>
<path d="M235.1 195.0Q236.6 192.0 238.8 192.0Q241 192.0 242.3 194.7" stroke="#aab6e8" stroke-width="0.9" fill="none"/>
<text x="245.8" y="193.9" font-size="6.9" fill="#111">55</text>
<rect x="231.9" y="197.6" width="203.5" height="12.2" fill="#fff"/>
<path d="M234.3 205.8Q236.2 202.3 238.8 202.3Q241.4 202.3 243 205.0" stroke="#6f83d2" stroke-width="1" fill="none"/>
<path d="M235.1 207.3Q236.6 204.3 238.8 204.3Q241 204.3 242.3 207.0" stroke="#aab6e8" stroke-width="0.9" fill="none"/>
<text x="245.8" y="206.2" font-size="6.9" fill="#111">-55</text>
<rect x="231.9" y="209.8" width="203.5" height="12.2" fill="#ebebeb"/>
<path d="M234.3 218.0Q236.2 214.5 238.8 214.5Q241.4 214.5 243 217.2" stroke="#6f83d2" stroke-width="1" fill="none"/>
<path d="M235.1 219.5Q236.6 216.5 238.8 216.5Q241 216.5 242.3 219.2" stroke="#aab6e8" stroke-width="0.9" fill="none"/>
<text x="245.8" y="218.4" font-size="6.9" fill="#111">89</text>
<rect x="231.9" y="222.0" width="203.5" height="7.2" fill="#fff"/>
<path d="M234.3 230.2Q236.2 226.7 238.8 226.7Q241.4 226.7 243 229.4" stroke="#6f83d2" stroke-width="1" fill="none"/>
<path d="M235.1 231.7Q236.6 228.7 238.8 228.7Q241 228.7 242.3 231.4" stroke="#aab6e8" stroke-width="0.9" fill="none"/>
<text x="245.8" y="230.6" font-size="6.9" fill="#111">-89</text>
<rect x="292" y="172.6" width="0.8" height="57" fill="#d8d8d8"/>
</g>
<rect x="435.6" y="157.9" width="12.5" height="71.2" fill="#f9f9fc"/>
<rect x="436.3" y="158.8" width="11.4" height="12.2" rx="1.5" fill="url(#gSb)" stroke="#e4ebfd" stroke-width="0.6"/>
<path d="M439.3 166.8L442 164L444.7 166.8" stroke="#3c55a8" stroke-width="1.5" fill="none"/>
<rect x="436.3" y="216.6" width="11.4" height="12.2" rx="1.5" fill="url(#gSb)" stroke="#e4ebfd" stroke-width="0.6"/>
<path d="M439.3 221.2L442 224L444.7 221.2" stroke="#3c55a8" stroke-width="1.5" fill="none"/>
<rect x="436.6" y="177.4" width="10.8" height="22" rx="1.5" fill="url(#gSb)" stroke="#dfe8fd" stroke-width="0.6"/>
<rect x="455.4" y="157.8" width="101.8" height="16.2" rx="2.2" fill="url(#gBtn)" stroke="#4a6a96" stroke-width="1.1"/>
<rect x="456.8" y="159.2" width="99" height="13.4" rx="1.5" fill="none" stroke="#c5d4ee" stroke-width="1"/>
<text x="506.4" y="169.2" font-size="8.3" fill="#111" text-anchor="middle" textLength="30" lengthAdjust="spacing">Anlegen</text>
<path d="M491.4 170.4H496.6" stroke="#111" stroke-width="0.7"/>
<rect x="455.8" y="182.5" width="101" height="15.4" rx="2.2" fill="#f5f4ea" stroke="#c9c7ba" stroke-width="0.9"/>
<text x="506.4" y="193.6" font-size="8.3" fill="#b4b1a2" text-anchor="middle" textLength="31" lengthAdjust="spacing">Löschen</text>
<path d="M490.9 194.8H495.2" stroke="#b4b1a2" stroke-width="0.7"/>
<text x="285.3" y="246.9" font-size="8.3" fill="#111" textLength="12.4" lengthAdjust="spacing">Stil:</text>
<rect x="303.2" y="236" width="97.2" height="13.5" fill="#fff" stroke="#7f9db9" stroke-width="0.8"/>
<rect x="306.3" y="238.2" width="9.3" height="9.2" fill="#c0c0c0" stroke="#9a9a9a" stroke-width="0.6"/>
<text x="319" y="246.9" font-size="8.3" fill="#111" textLength="20.4" lengthAdjust="spacing">Silver</text>
<rect x="388.2" y="237" width="11.4" height="11.6" rx="1.5" fill="url(#gSb)" stroke="#e4ebfd" stroke-width="0.6"/>
<path d="M391.2 241.2L393.9 244L396.6 241.2" stroke="#3c55a8" stroke-width="1.5" fill="none"/>
<rect x="407" y="236.6" width="72.5" height="12" fill="#fbfbf8" stroke="#c9c7ba" stroke-width="0.8"/>
<path d="M410.8 242.4H462.3" stroke="#444" stroke-width="0.8"/>
<rect x="466.6" y="237.5" width="11.8" height="10.4" rx="1.5" fill="#efeee6" stroke="#e0ded2" stroke-width="0.6"/>
<path d="M469.8 241.4L472.5 244L475.2 241.4" stroke="#c9c7ba" stroke-width="1.4" fill="none"/>
<rect x="485.2" y="236.6" width="73" height="12.4" fill="#fff" stroke="#7f9db9" stroke-width="0.8"/>
<path d="M490.4 242.4H540.7" stroke="#111" stroke-width="1.9"/>
<rect x="546" y="237.5" width="11.4" height="10.8" rx="1.5" fill="url(#gSb)" stroke="#e4ebfd" stroke-width="0.6"/>
<path d="M549 241.3L551.7 244.1L554.4 241.3" stroke="#3c55a8" stroke-width="1.5" fill="none"/>
<rect x="376" y="268.6" width="58.8" height="14.9" rx="2.2" fill="url(#gBtn)" stroke="#2e5aa8" stroke-width="1.1"/>
<rect x="377.3" y="269.9" width="56.2" height="12.3" rx="1.5" fill="none" stroke="#a9c2f0" stroke-width="1.1"/>
<text x="405.4" y="279.3" font-size="8.3" fill="#111" text-anchor="middle">OK</text>
<rect x="441.3" y="268.6" width="59" height="14.9" rx="2.2" fill="url(#gBtn)" stroke="#4a6a96" stroke-width="1"/>
<text x="471.2" y="279.3" font-size="8.3" fill="#111" text-anchor="middle" textLength="39.5" lengthAdjust="spacing">Abbrechen</text>
<rect x="506.3" y="268.6" width="59.4" height="14.9" rx="2.2" fill="url(#gBtn)" stroke="#4a6a96" stroke-width="1"/>
<text x="536.3" y="279.3" font-size="8.3" fill="#111" text-anchor="middle" textLength="21.4" lengthAdjust="spacing">Reset</text>
</g>
</svg>
</body></html>
